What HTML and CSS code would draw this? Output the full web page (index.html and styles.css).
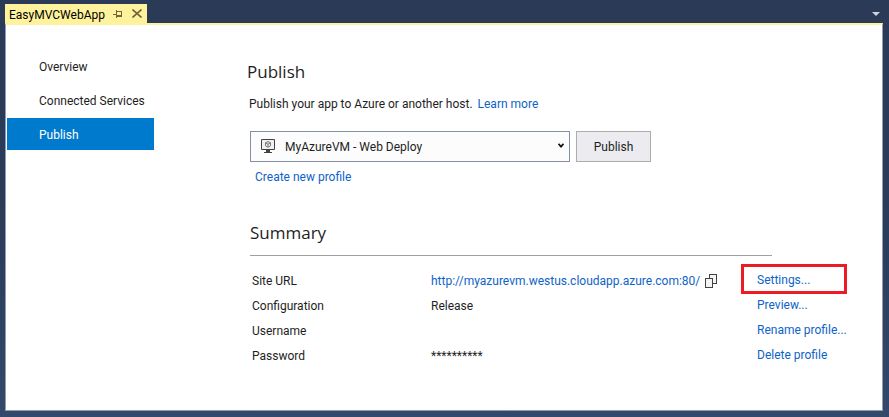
FILE: index.html
```html
<!DOCTYPE html>
<html lang="en">
<head>
<meta charset="utf-8">
<title>EasyMVCWebApp</title>
<link rel="stylesheet" href="styles.css">
</head>
<body>
<header class="tabs">
  <div class="tab">
    <span class="tab-name">EasyMVCWebApp</span>
    <button class="icon-button pin" aria-label="Pin tab">
      <svg width="9" height="8" viewBox="0 0 9 8" fill="none" stroke="#75633a" shape-rendering="crispEdges"><path d="M0 4.500h3M3.500 0v8M4 1.500h4.500v5M4 5.500h4.500M4 6.500h4.500"/></svg>
    </button>
    <button class="icon-button" aria-label="Close tab">
      <svg width="10" height="9" viewBox="0 0 10 9" fill="none" stroke="#75633a" stroke-width="1.600"><path d="M.5.5l9 8M9.500.5l-9 8"/></svg>
    </button>
  </div>
  <button class="icon-button overflow" aria-label="Open documents">
    <svg width="8" height="4" viewBox="0 0 8 4"><path d="M0 0h8L4 4z" fill="#ced4dd"/></svg>
  </button>
</header>
<div class="panel">
  <nav class="side">
    <a href="#overview">Overview</a>
    <a href="#services">Connected Services</a>
    <a href="#publish" class="active" aria-current="page">Publish</a>
  </nav>
  <main class="main">
    <h1>Publish</h1>
    <p class="intro">Publish your app to Azure or another host. <a class="learn" href="#learn">Learn more</a></p>
    <div class="body">
      <div class="picker">
        <div class="select-wrap">
          <select aria-label="Publish profile"><option>MyAzureVM - Web Deploy</option></select>
          <svg class="vm" width="14" height="14" viewBox="0 0 14 14" fill="none"><path d="M.5.5h13v10H.5z" fill="#f0eff1" stroke="#424242"/><path d="M5 11h4v2h2v1H3v-1h2z" fill="#424242"/><path d="M7 2.500l2.500 1.300v3L7 8.300 4.500 6.800v-3zM4.500 3.800L7 5.200l2.500-1.400M7 5.200v3" stroke="#777"/></svg>
          <svg class="arrow" width="6" height="5" viewBox="0 0 6 5" fill="none" stroke="#111" stroke-width="1.700"><path d="M.5.8L3 3.600 5.500.8"/></svg>
        </div>
        <button class="publish">Publish</button>
      </div>
      <a class="create" href="#create">Create new profile</a>
      <h2>Summary</h2>
      <div class="details">
        <table>
          <tr><th scope="row">Site URL</th><td><span class="url"><a href="#site">http://myazurevm.westus.cloudapp.azure.com:80/</a><button class="icon-button" aria-label="Copy URL"><svg width="12" height="14" viewBox="0 0 12 14" fill="#f4f4f5" stroke="#424242" shape-rendering="crispEdges"><path d="M4.500.5h7v9h-7z"/><path d="M.5 4.500h7v9h-7z"/></svg></button></span></td></tr>
          <tr><th scope="row">Configuration</th><td>Release</td></tr>
          <tr><th scope="row">Username</th><td></td></tr>
          <tr><th scope="row">Password</th><td>**********</td></tr>
        </table>
        <ul class="actions">
          <li class="marked"><a href="#settings">Settings...</a></li>
          <li><a href="#preview">Preview...</a></li>
          <li><a href="#rename">Rename profile...</a></li>
          <li><a href="#delete">Delete profile</a></li>
        </ul>
      </div>
    </div>
  </main>
</div>
</body>
</html>
```
FILE: styles.css
```css
* { box-sizing: border-box; }
body {
  margin: 0;
  min-height: 100vh;
  padding: 4px 6px 6px 5px;
  display: flex;
  flex-direction: column;
  background: linear-gradient(#2b3a56, #2b3b58 50%, #34486a);
  color: #1e1e1e;
  font: 12px/16px Roboto, "Segoe UI", sans-serif;
}
a { color: #0e63c8; text-decoration: none; }
button, select { font: inherit; color: inherit; }
.icon-button { display: flex; padding: 0; border: 0; background: none; }
.tabs { display: flex; justify-content: space-between; }
.tab {
  display: flex;
  align-items: center;
  height: 19px;
  width: 142px;
  padding: 0 5px 0 4px;
  background: #fff29d;
  color: #000;
}
.tab-name { flex: 1; padding-top: 2px; }
.pin { margin-right: 10px; }
.overflow { align-self: center; margin-right: 3px; }
.panel {
  flex: 1;
  display: flex;
  border: 1px solid #8e9bbc;
  border-top: 2px solid #fff29d;
  background: #fff;
}
.side {
  display: flex;
  flex-direction: column;
  gap: 2px;
  width: 148px;
  padding: 25px 0 0 1px;
}
.side a { padding: 9px 0 7px 32px; color: #1e1e1e; white-space: nowrap; }
.side .active { background: #007acc; color: #fff; }
.main { flex: 1; padding: 35px 24px 0 93px; }
h1, h2 { margin: 0; font: 400 17px/24px "Open Sans", "Segoe UI", sans-serif; }
.intro { margin: 12px 0 0 2px; }
.learn { margin-left: 2px; }
.body { padding: 19px 0 0 3px; }
.picker { display: flex; gap: 6px; }
.select-wrap { position: relative; width: 320px; }
select {
  display: block;
  appearance: none;
  width: 100%;
  height: 31px;
  padding: 1px 24px 0 34px;
  border: 1px solid #8591a2;
  border-radius: 0;
  background: #fcfcfc;
}
.vm, .arrow { position: absolute; pointer-events: none; }
.vm { left: 11px; top: 8px; }
.arrow { right: 6px; top: 12px; }
.publish { width: 75px; height: 31px; padding: 1px 0 0; border: 1px solid #acacac; background: #ececf0; }
.create { display: inline-block; margin: 7px 0 0 5px; }
h2 { max-width: 522px; margin-top: 36px; padding-bottom: 10px; border-bottom: 1px solid #a0a0a0; }
.details { display: flex; padding-top: 8px; }
table { width: 491px; border-spacing: 0; table-layout: fixed; margin-top: 4px; }
th, td { height: 25px; padding: 0; text-align: left; font-weight: 400; white-space: nowrap; }
th { width: 181px; padding-left: 2px; }
.url { display: flex; align-items: center; gap: 5px; }
.actions { width: 106px; margin: 0; padding: 0; list-style: none; white-space: nowrap; }
.actions li { height: 25px; padding: 3px 0 0 16px; }
.actions .marked { height: 30px; border: 3px solid #ed1c24; padding: 5px 0 0 13px; }
```
